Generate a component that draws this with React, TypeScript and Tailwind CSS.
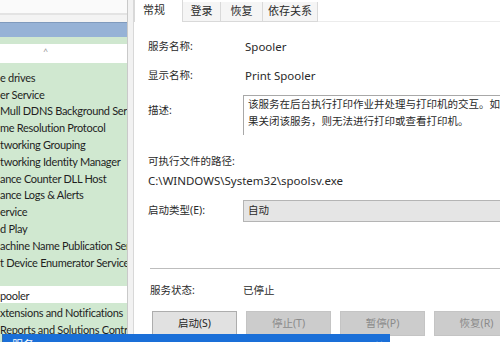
import React from "react";

const rows: { text: string; white?: boolean }[] = [
  { text: "e drives" },
  { text: "er Service" },
  { text: "Mull DDNS Background Service" },
  { text: "me Resolution Protocol" },
  { text: "tworking Grouping" },
  { text: "tworking Identity Manager" },
  { text: "ance Counter DLL Host" },
  { text: "ance Logs & Alerts" },
  { text: "ervice" },
  { text: "d Play" },
  { text: "achine Name Publication Service" },
  { text: "t Device Enumerator Service" },
  { text: "" },
  { text: "pooler", white: true },
  { text: "xtensions and Notifications" },
  { text: "Reports and Solutions Control" },
];

const sans = "font-['Segoe_UI','Noto_Sans','Noto_Sans_CJK_SC',sans-serif]";
const listFont = "font-['Lato','Noto_Sans',sans-serif]";

const ServiceList = () => (
  <div className={`w-[127px] flex flex-col overflow-hidden ${listFont} text-[11px] tracking-[-0.3px] text-[#1f1f1f]`}>
    <div className="h-[13px] bg-[#fafafa]" />
    <div className="h-[2px] bg-[#e3e3e3]" />
    <div className="h-[7px] bg-[#f3f3f3]" />
    <div className="h-[15px] bg-[#96b2d6] border-t border-[#7f9abd]" />
    <div className="h-[7px] bg-[#cfe7cf]" />
    <div className="h-[19px] bg-white relative">
      <span className="absolute left-[43px] top-[1px] text-[9px] text-[#9a9a9a]">^</span>
    </div>
    <div className="flex flex-col bg-[#d0e8d0] pt-[5px] flex-1">
      {rows.map((r, i) => (
        <div
          key={i}
          className={`h-[16.8px] flex items-center whitespace-nowrap leading-none pt-[2px] ${r.white ? "bg-white" : ""}`}
        >
          {r.text}
        </div>
      ))}
    </div>
  </div>
);

const Tabs = () => (
  <div className="flex items-end h-[22px] text-[11px]">
    <div className="w-[49px] h-[22px] bg-white border-l border-r border-[#d9d9d9] pl-[8px] flex items-center pb-[2px]">
      常规
    </div>
    <div className="w-[38px] h-[20px] bg-[#f5f5f5] border-r border-b border-[#d9d9d9] flex items-center justify-center">
      登录
    </div>
    <div className="w-[42px] h-[20px] bg-[#f5f5f5] border-r border-b border-[#d9d9d9] flex items-center justify-center">
      恢复
    </div>
    <div className="w-[55px] h-[20px] bg-[#f5f5f5] border-r border-b border-[#d9d9d9] flex items-center justify-center">
      依存关系
    </div>
    <div className="flex-1 h-[20px] border-b border-[#ececec]" />
  </div>
);

const Btn = ({ label, enabled }: { label: string; enabled?: boolean }) => (
  <div
    className={`w-[85px] h-[25px] shrink-0 flex items-center justify-center border ${
      enabled ? "bg-[#e1e1e1] border-[#adadad] text-[#1f1f1f]" : "bg-[#cccccc] border-[#c4c4c4] text-[#8a8a8a]"
    }`}
  >
    {label}
  </div>
);

const Dialog = () => (
  <div className={`flex-1 flex flex-col bg-white overflow-hidden ${sans} text-[10.5px] text-[#2a2a2a]`}>
    <Tabs />
    <div className="flex flex-col pl-[14px]">
      <div className="flex items-center h-[14px] mt-[18px]">
        <span className="w-[97px] shrink-0">服务名称:</span>
        <span className="text-[11.5px]">Spooler</span>
      </div>
      <div className="flex items-center h-[14px] mt-[15px]">
        <span className="w-[97px] shrink-0">显示名称:</span>
        <span className="text-[11.5px]">Print Spooler</span>
      </div>
      <div className="flex mt-[12px] h-[40px]">
        <span className="w-[95px] shrink-0 pt-[8px]">描述:</span>
        <div className="flex-1 border-l border-t border-[#a8a8a8] pl-[4px] leading-[17px] whitespace-nowrap overflow-hidden">
          <div>该服务在后台执行打印作业并处理与打印机的交互。如</div>
          <div>果关闭该服务，则无法进行打印或查看打印机。</div>
        </div>
      </div>
      <div className="h-[14px] flex items-center mt-[20px]">可执行文件的路径:</div>
      <div className="h-[14px] flex items-center mt-[5px] text-[11.5px] whitespace-nowrap">
        C:\WINDOWS\System32\spoolsv.exe
      </div>
      <div className="flex items-center mt-[12px] h-[22px]">
        <span className="w-[95px] shrink-0">启动类型(E):</span>
        <div className="flex-1 h-[22px] bg-[#e5e5e5] border border-[#b4b4b4] border-r-0 flex items-center pl-[4px]">
          自动
        </div>
      </div>
      <div className="h-px bg-[#bdbdbd] mt-[46px] ml-[2px]" />
      <div className="flex items-center h-[14px] mt-[15px] pl-[2px]">
        <span className="w-[93px] shrink-0">服务状态:</span>
        <span>已停止</span>
      </div>
      <div className="flex gap-[9px] mt-[13px] pl-[4px]">
        <Btn label="启动(S)" enabled />
        <Btn label="停止(T)" />
        <Btn label="暂停(P)" />
        <Btn label="恢复(R)" />
      </div>
    </div>
  </div>
);

export default function App() {
  return (
    <div className="w-[500px] h-[342px] relative overflow-hidden flex bg-white">
      <ServiceList />
      <div className="w-px bg-[#c9c9c9]" />
      <div className="w-[5px] bg-[#f2f2f2]" />
      <div className="w-px bg-[#d8d8d8]" />
      <Dialog />
      <div className={`absolute left-[2px] top-[334px] w-[388px] h-[12px] bg-[#1a6fd8] border-l border-[#3a6aa8] ${sans}`}>
        <span className="absolute left-[9px] top-[5px] text-[11px] text-white leading-none">服务</span>
        <span className="absolute left-[372px] top-[5px] text-[10px] text-[#cfe0f5] leading-none">✕</span>
      </div>
    </div>
  );
}
